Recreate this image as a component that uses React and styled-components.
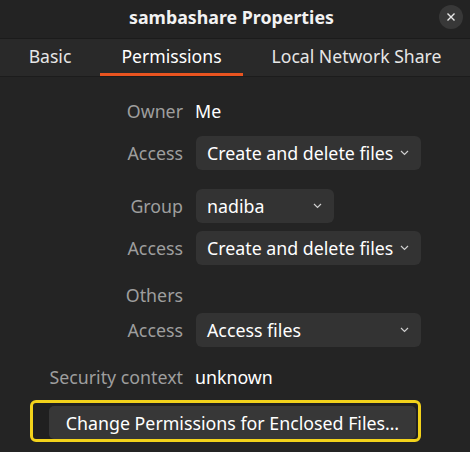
import React from 'react'
import styled, { createGlobalStyle } from 'styled-components'

const GlobalStyle = createGlobalStyle`
  html, body {
    margin: 0;
    padding: 0;
    background: #242424;
  }
  body {
    font-family: "Noto Sans", "Open Sans", sans-serif;
  }
`

const Window = styled.div`
  width: 470px;
  height: 452px;
  display: flex;
  flex-direction: column;
  background: #242424;
  color: #ffffff;
  overflow: hidden;
`

const HeaderBar = styled.header`
  height: 38px;
  display: grid;
  grid-template-columns: 1fr auto 1fr;
  align-items: center;
  background: #232323;
  border-bottom: 1px solid #1b1b1b;
  padding: 0 7px 0 0;
`

const Title = styled.h1`
  grid-column: 2;
  margin: 0;
  font-size: 17.8px;
  font-weight: 700;
  color: #f2f2f2;
  padding-bottom: 5px;
`

const CloseButton = styled.button`
  grid-column: 3;
  justify-self: end;
  width: 24px;
  height: 24px;
  border: none;
  border-radius: 50%;
  background: #383838;
  display: flex;
  align-items: center;
  justify-content: center;
  padding: 0;
  margin-top: -5px;
`

const TabBar = styled.nav`
  height: 37px;
  display: grid;
  grid-template-columns: 100px 143px 1fr;
  background: #292929;
  border-bottom: 1px solid #1c1c1c;
`

const Tab = styled.div`
  position: relative;
  display: flex;
  align-items: center;
  justify-content: center;
  font-size: 17.6px;
  color: ${p => (p.$active ? '#ffffff' : '#e6e6e6')};
  padding-bottom: 3px;
  &::after {
    content: '';
    display: ${p => (p.$active ? 'block' : 'none')};
    position: absolute;
    left: 0;
    right: 0;
    bottom: 0;
    height: 3px;
    background: #e95420;
  }
`

const Body = styled.main`
  display: flex;
  flex-direction: column;
  padding-top: 17px;
`

const Row = styled.div`
  display: grid;
  grid-template-columns: 183px auto;
  column-gap: 12px;
  align-items: center;
  height: ${p => p.$h || 34}px;
  margin-top: ${p => p.$top || 0}px;
`

const Label = styled.span`
  text-align: right;
  font-size: 17.8px;
  color: #9e9e9e;
  white-space: nowrap;
`

const Value = styled.span`
  font-size: 17.8px;
  color: #ffffff;
`

const Dropdown = styled.div`
  box-sizing: border-box;
  width: ${p => p.$w}px;
  height: 34px;
  margin-left: 1px;
  display: flex;
  align-items: center;
  justify-content: space-between;
  padding: 0 12px 0 11px;
  background: #333333;
  border-radius: 6px;
  font-size: 17.8px;
  color: #ffffff;
  white-space: nowrap;
`

const Chevron = () => (
  <svg width="9" height="6" viewBox="0 0 9 6">
    <path d="M1 1 L4.5 4.5 L8 1" fill="none" stroke="#cfcfcf" strokeWidth="1.2" />
  </svg>
)

const Highlight = styled.div`
  box-sizing: border-box;
  width: 391px;
  height: 42px;
  margin: 6px 0 0 30px;
  border: 3px solid #f2d21b;
  border-radius: 6px;
  padding: 3px 2px 0 16px;
  background: #202020;
`

const ActionButton = styled.button`
  width: 100%;
  height: 33px;
  border: none;
  border-radius: 5px;
  background: #373737;
  color: #ffffff;
  font-family: inherit;
  font-size: 17.8px;
  padding: 0;
  white-space: nowrap;
`

const App = () => (
  <>
    <GlobalStyle />
    <Window>
      <HeaderBar>
        <Title>sambashare Properties</Title>
        <CloseButton aria-label="Close">
          <svg width="10" height="10" viewBox="0 0 10 10">
            <path d="M1.5 1.5 L8.5 8.5 M8.5 1.5 L1.5 8.5" stroke="#e8e8e8" strokeWidth="1.4" />
          </svg>
        </CloseButton>
      </HeaderBar>
      <TabBar>
        <Tab>Basic</Tab>
        <Tab $active>Permissions</Tab>
        <Tab>Local Network Share</Tab>
      </TabBar>
      <Body>
        <Row>
          <Label>Owner</Label>
          <Value>Me</Value>
        </Row>
        <Row $top={8}>
          <Label>Access</Label>
          <Dropdown $w={225}>Create and delete files<Chevron /></Dropdown>
        </Row>
        <Row $top={19}>
          <Label>Group</Label>
          <Dropdown $w={138}>nadiba<Chevron /></Dropdown>
        </Row>
        <Row $top={8}>
          <Label>Access</Label>
          <Dropdown $w={225}>Create and delete files<Chevron /></Dropdown>
        </Row>
        <Row $top={18} $h={24}>
          <Label>Others</Label>
          <span />
        </Row>
        <Row $top={6}>
          <Label>Access</Label>
          <Dropdown $w={225}>Access files<Chevron /></Dropdown>
        </Row>
        <Row $top={13}>
          <Label>Security context</Label>
          <Value>unknown</Value>
        </Row>
        <Highlight>
          <ActionButton>Change Permissions for Enclosed Files…</ActionButton>
        </Highlight>
      </Body>
    </Window>
  </>
)

export default App
